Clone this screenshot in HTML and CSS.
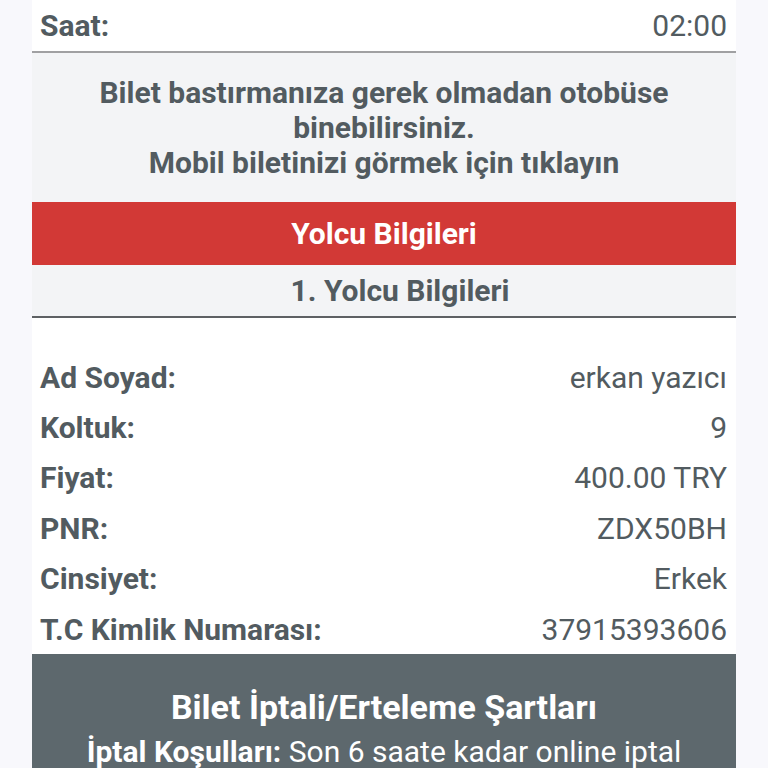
FILE: index.html
```html
<!DOCTYPE html>
<html lang="tr">
<head>
<meta charset="utf-8">
<link rel="stylesheet" href="styles.css">
</head>
<body>
<div class="wrap">
  <div class="row saat"><span class="lbl">Saat:</span><span class="val">02:00</span></div>
  <div class="notice">Bilet bastırmanıza gerek olmadan otobüse binebilirsiniz.<br>Mobil biletinizi görmek için tıklayın</div>
  <div class="redbar">Yolcu Bilgileri</div>
  <div class="subhead">1. Yolcu Bilgileri</div>
  <div class="rows">
    <div class="row"><span class="lbl">Ad Soyad:</span><span class="val">erkan yazıcı</span></div>
    <div class="row"><span class="lbl">Koltuk:</span><span class="val">9</span></div>
    <div class="row"><span class="lbl">Fiyat:</span><span class="val">400.00 TRY</span></div>
    <div class="row"><span class="lbl">PNR:</span><span class="val">ZDX50BH</span></div>
    <div class="row"><span class="lbl">Cinsiyet:</span><span class="val">Erkek</span></div>
    <div class="row"><span class="lbl">T.C Kimlik Numarası:</span><span class="val">37915393606</span></div>
  </div>
  <div class="terms">
    <div class="terms-title">Bilet İptali/Erteleme Şartları</div>
    <div class="terms-text"><b>İptal Koşulları:</b> Son 6 saate kadar online iptal</div>
  </div>
</div>
</body>
</html>
```
FILE: styles.css
```css
html, body {
  margin: 0;
  padding: 0;
  background: #f8f8fc;
  font-family: Roboto, "Noto Sans", sans-serif;
  color: #525b60;
  overflow: hidden;
  height: 768px;
}
.wrap {
  margin: 0 32px;
  width: 704px;
}
.row {
  display: flex;
  justify-content: space-between;
  align-items: center;
  height: 50.4px;
  padding: 0 9px 0 8px;
  font-size: 30px;
  background: #ffffff;
}
.lbl {
  font-weight: 700;
}
.val {
  font-weight: 400;
}
.saat {
  height: 51px;
  border-bottom: 2px solid #a0a0a2;
}
.notice {
  background: #f3f4f6;
  text-align: center;
  font-weight: 700;
  font-size: 30px;
  line-height: 35px;
  padding: 22px 30px;
}
.redbar {
  background: #d23936;
  color: #ffffff;
  text-align: center;
  font-weight: 700;
  font-size: 30px;
  height: 63px;
  line-height: 63px;
}
.subhead {
  background: #f3f4f6;
  text-align: center;
  font-weight: 700;
  font-size: 30px;
  height: 51px;
  line-height: 51px;
  padding-left: 32px;
  border-bottom: 2px solid #5e6164;
}
.rows {
  background: #ffffff;
  padding-top: 34px;
}
.terms {
  background: #5d686d;
  color: #ffffff;
  text-align: center;
  padding-top: 33px;
}
.terms-title {
  font-weight: 700;
  font-size: 34px;
  line-height: 40px;
}
.terms-text {
  font-size: 30px;
  line-height: 50px;
}
.terms-text b {
  font-weight: 700;
}
```
